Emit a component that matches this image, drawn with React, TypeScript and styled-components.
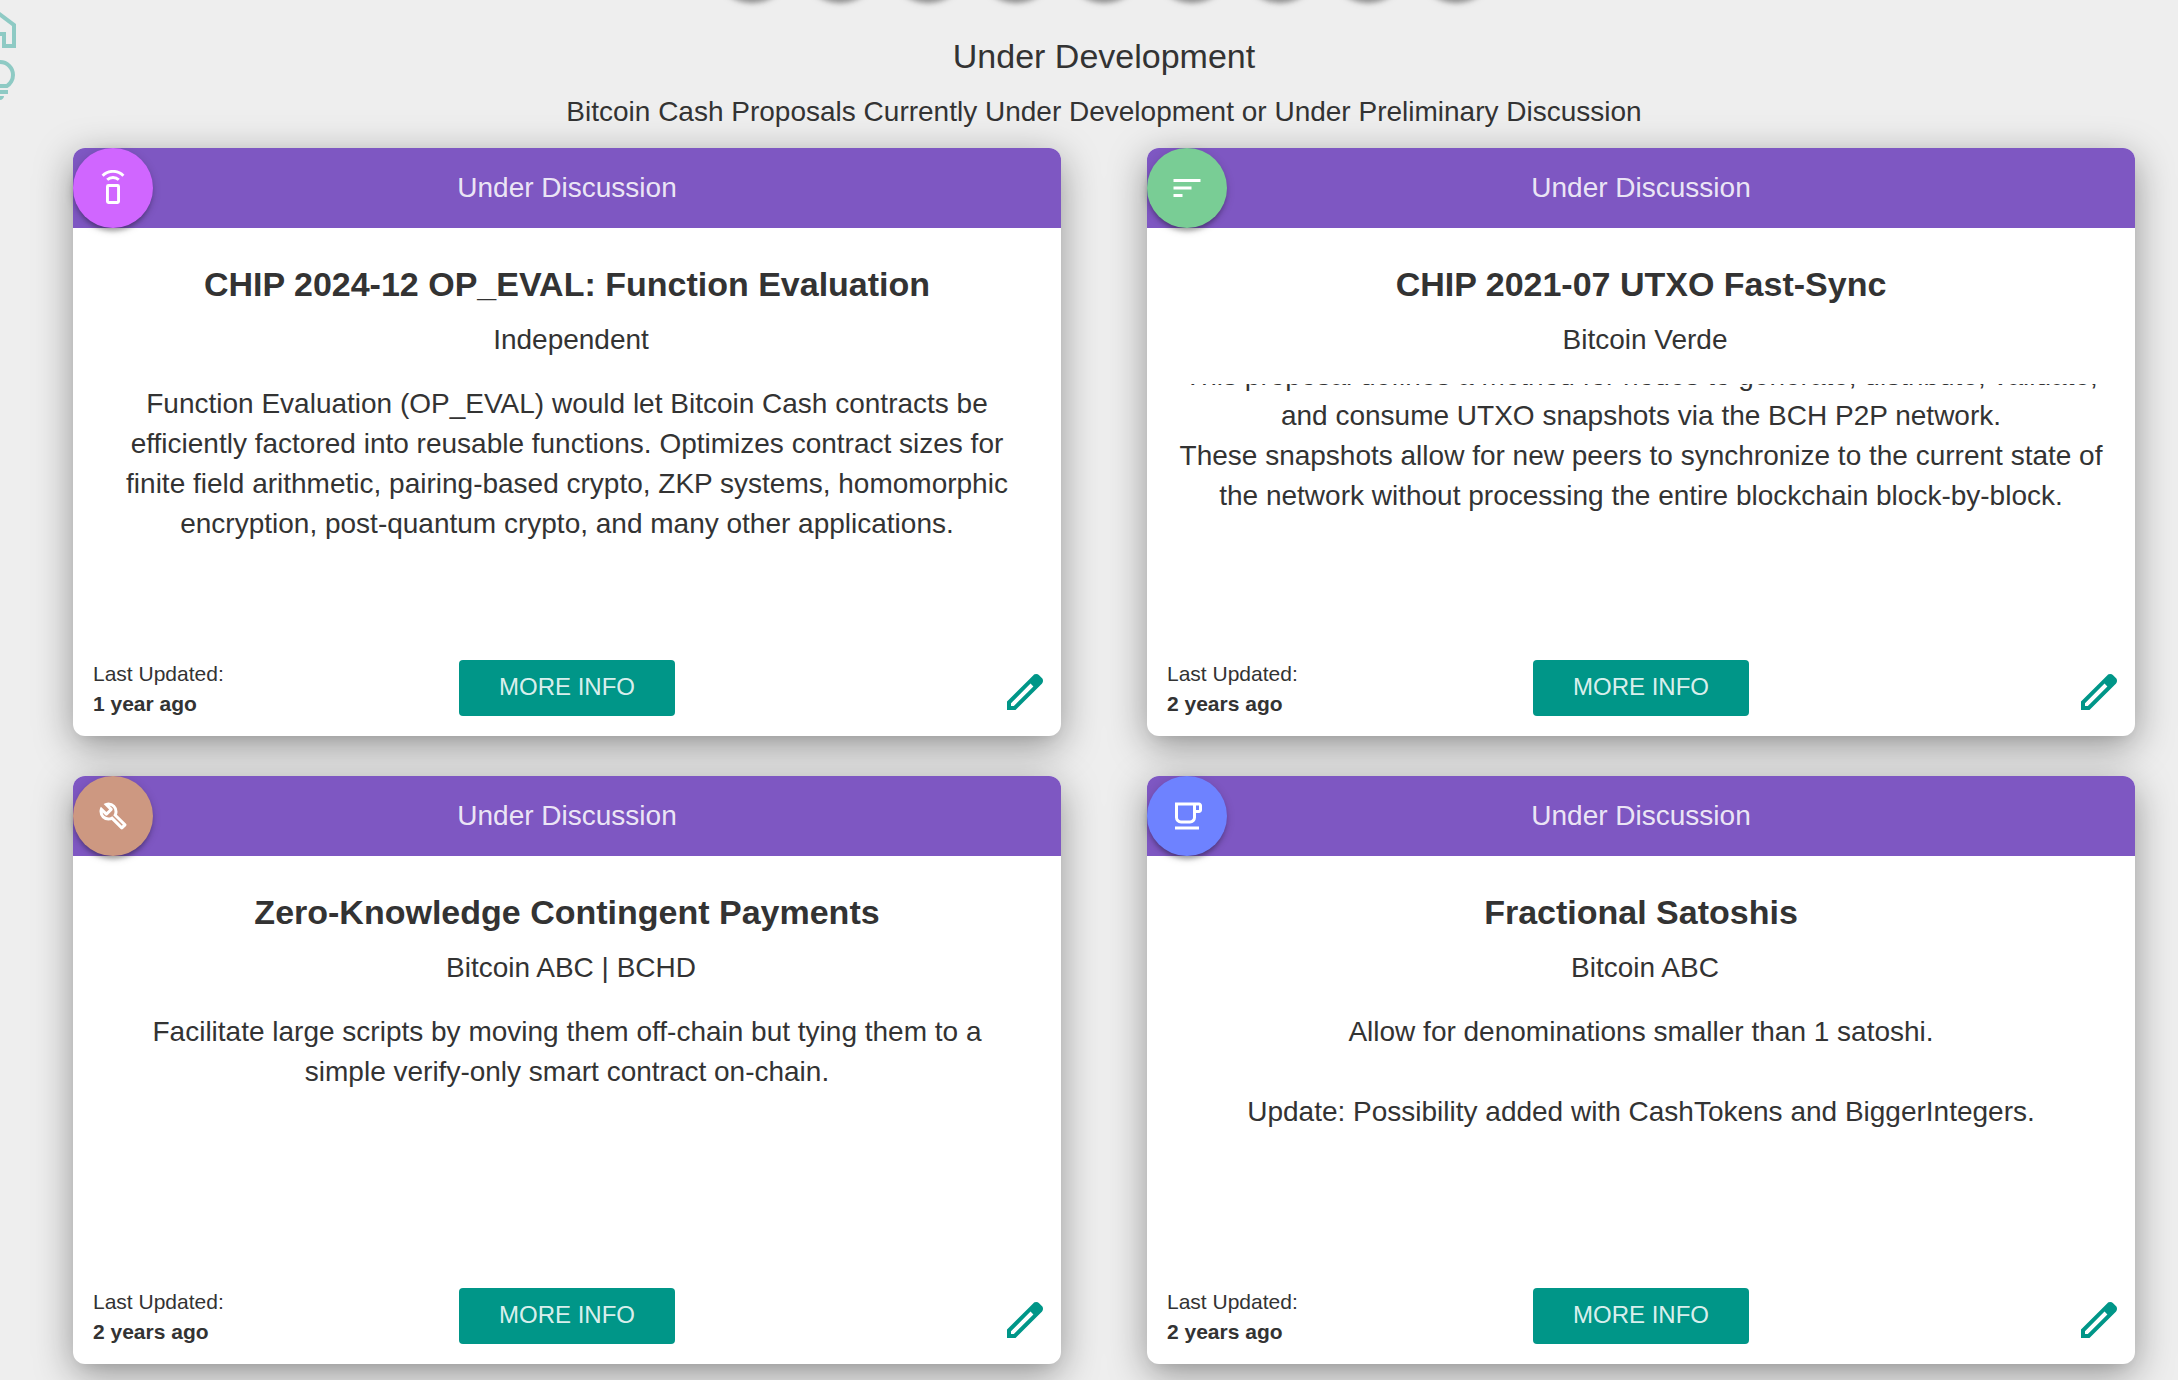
import React, { useLayoutEffect, useRef } from "react";
import styled, { createGlobalStyle } from "styled-components";

const GlobalStyle = createGlobalStyle`
  *, *::before, *::after { box-sizing: border-box; }
  body {
    margin: 0;
    background: #eee;
    color: #333;
    font-family: "Liberation Sans", Arial, sans-serif;
    font-size: 28px;
    line-height: 40px;
    overflow: hidden;
  }
`;

const Page = styled.div`
  display: flex;
  min-height: 100vh;
`;

const SideNav = styled.nav`
  flex: none;
  width: 30px;
  padding-top: 6px;
  display: flex;
  flex-direction: column;
  align-items: flex-end;
  gap: 2px;
`;

const NavLink = styled.a`
  display: flex;
  margin-right: 6px;
  color: #009688;
  opacity: 0.4;
`;

const Main = styled.main`
  flex: 1;
  min-width: 0;
`;

const AvatarRow = styled.div`
  display: flex;
  justify-content: center;
  gap: 8px;
  margin-top: -80px;
`;

const Avatar = styled.button<{ $color: string }>`
  flex: none;
  display: flex;
  align-items: center;
  justify-content: center;
  width: 80px;
  height: 80px;
  padding: 0;
  border: 0;
  border-radius: 50%;
  color: #fff;
  background: ${(p) => p.$color};
  box-shadow:
    0 4px 4px rgba(0, 0, 0, 0.14),
    0 6px 4px -4px rgba(0, 0, 0, 0.2),
    0 2px 10px rgba(0, 0, 0, 0.14);
`;

const Heading = styled.header`
  padding: 28px 0 8px;
  text-align: center;
`;

const SectionTitle = styled.h1`
  margin: 0;
  font-size: 34px;
  font-weight: 400;
  line-height: 56px;
`;

const SectionNote = styled.p`
  margin: 0;
  font-size: 28px;
  line-height: 56px;
`;

const CardGrid = styled.section`
  display: grid;
  grid-template-columns: repeat(2, minmax(0, 1fr));
  gap: 40px 86px;
  padding: 0 43px 40px;
`;

const CardBox = styled.article`
  display: flex;
  flex-direction: column;
  height: 588px;
  border-radius: 12px;
  background: #fff;
  box-shadow:
    0 10px 38px rgba(0, 0, 0, 0.38),
    0 8px 12px -6px rgba(0, 0, 0, 0.06);
`;

const CardHeader = styled.div`
  display: grid;
  grid-template-columns: 80px 1fr 80px;
  align-items: center;
  border-radius: 12px 12px 0 0;
  background: #7e57c2;
  color: rgba(255, 255, 255, 0.87);
  text-align: center;
`;

const CardTitle = styled.h2`
  margin: 28px 0 0;
  font-size: 34px;
  font-weight: 700;
  line-height: 56px;
  text-align: center;
`;

const CardOwner = styled.p`
  margin: 0 0 16px;
  padding-left: 8px;
  line-height: 56px;
  text-align: center;
`;

const Description = styled.div`
  flex: 1;
  min-height: 0;
  padding: 0 28px;
  overflow-y: auto;
  scrollbar-width: none;
  text-align: center;
  white-space: pre-line;
`;

const CardFooter = styled.footer`
  display: grid;
  grid-template-columns: 1fr auto 1fr;
  align-items: center;
  height: 100px;
  padding: 4px 12px 0 20px;
`;

const Updated = styled.div`
  padding-top: 2px;
  font-size: 21px;
  line-height: 30px;
`;

const InfoButton = styled.button`
  width: 216px;
  height: 56px;
  margin-right: 8px;
  padding: 0 0 2px;
  border: 0;
  border-radius: 4px;
  background: #009688;
  color: rgba(255, 255, 255, 0.87);
  font: 400 24px/54px "Liberation Sans", Arial, sans-serif;
`;

const EditLink = styled.a`
  display: flex;
  justify-self: end;
  padding-top: 8px;
  color: #009688;
`;

const paths = {
  home: "M240-200h120v-240h240v240h120v-360L480-740 240-560v360Zm-80 80v-480l320-240 320 240v480H520v-240h-80v240H160Z",
  bulb: "M480-80q-33 0-56.5-23.5T400-160h160q0 33-23.5 56.5T480-80ZM320-200v-80h320v80H320Zm10-120q-69-41-109.5-110T180-580q0-125 87.5-212.5T480-880q125 0 212.5 87.5T780-580q0 81-40.5 150T630-320H330Zm24-80h252q45-32 69.5-79T700-580q0-92-64-156t-156-64q-92 0-156 64t-64 156q0 54 24.5 101t69.5 79Z",
  edit: "M200-200h57l391-391-57-57-391 391v57Zm-80 80v-170l528-527q12-11 26.5-17t30.5-6q16 0 31 6t26 18l55 56q12 11 17.5 26t5.5 30q0 16-5.5 30.5T817-647L290-120H120Zm499-499-28-29 57 57-29-28Z",
  sort: "M120-240v-80h240v80H120Zm0-200v-80h480v80H120Zm0-200v-80h720v80H120Z",
  build: "M686-132 444-376q-20 8-40.5 12t-43.5 4q-100 0-170-70t-70-170q0-36 10-68.5t28-61.5l146 146 72-72-146-146q29-18 61.5-28t68.5-10q100 0 170 70t70 170q0 23-4 43.5T584-516l244 242q12 12 12 29t-12 29l-84 84q-12 12-29 12t-29-12Zm29-85 27-27-256-256q18-20 26-46.5t8-53.5q0-60-38.5-104.5T386-758l74 74q12 12 12 28t-12 28L332-500q-12 12-28 12t-28-12l-74-74q9 57 53.5 95.5T360-440q26 0 53-8t47-25l255 256Z",
  cafe: "M160-120v-80h640v80H160Zm160-160q-66 0-113-47t-47-113v-400h640q33 0 56.5 23.5T880-760v120q0 33-23.5 56.5T800-560h-80v120q0 66-47 113t-113 47H320Zm0-80h240q33 0 56.5-23.5T640-440v-320H240v320q0 33 23.5 56.5T320-360Zm400-280h80v-120h-80v120Z",
};

type IconName = keyof typeof paths | "remote";

function Icon({ name, size }: { name: IconName; size: number }) {
  if (name === "remote") {
    return (
      <svg width={size} height={size} viewBox="0 0 36 36" fill="none" stroke="currentColor" strokeWidth="2.9" aria-hidden="true">
        <rect x="12.45" y="15.45" width="11.1" height="17.1" rx="1" />
        <path d="M7.6 5.7A14.6 14.6 0 0 1 28.4 5.7M12.2 9.8A8.6 8.6 0 0 1 23.8 9.8" />
      </svg>
    );
  }
  return (
    <svg width={size} height={size} viewBox="0 -960 960 960" fill="currentColor" aria-hidden="true">
      <path d={paths[name]} />
    </svg>
  );
}

interface Proposal {
  icon: IconName;
  color: string;
  title: string;
  owner: string;
  text: string;
  updated: string;
  readToEnd?: boolean;
}

const proposals: Proposal[] = [
  {
    icon: "remote",
    color: "#d066ff",
    title: "CHIP 2024-12 OP_EVAL: Function Evaluation",
    owner: "Independent",
    text: "Function Evaluation (OP_EVAL) would let Bitcoin Cash contracts be efficiently factored into reusable functions. Optimizes contract sizes for finite field arithmetic, pairing-based crypto, ZKP systems, homomorphic encryption, post-quantum crypto, and many other applications.",
    updated: "1 year ago",
  },
  {
    icon: "sort",
    color: "#79cd95",
    title: "CHIP 2021-07 UTXO Fast-Sync",
    owner: "Bitcoin Verde",
    text: "This proposal defines a method for nodes to generate, distribute, validate, and consume UTXO snapshots via the BCH P2P network.\nThese snapshots allow for new peers to synchronize to the current state of the network without processing the entire blockchain block-by-block.\n\n\n\n",
    updated: "2 years ago",
    readToEnd: true,
  },
  {
    icon: "build",
    color: "#cd9881",
    title: "Zero-Knowledge Contingent Payments",
    owner: "Bitcoin ABC | BCHD",
    text: "Facilitate large scripts by moving them off-chain but tying them to a\nsimple verify-only smart contract on-chain.",
    updated: "2 years ago",
  },
  {
    icon: "cafe",
    color: "#6e82ff",
    title: "Fractional Satoshis",
    owner: "Bitcoin ABC",
    text: "Allow for denominations smaller than 1 satoshi.\n\nUpdate: Possibility added with CashTokens and BiggerIntegers.",
    updated: "2 years ago",
  },
];

function ProposalCard({ proposal }: { proposal: Proposal }) {
  const body = useRef<HTMLDivElement>(null);

  useLayoutEffect(() => {
    if (proposal.readToEnd && body.current) {
      body.current.scrollTop = body.current.scrollHeight;
    }
  }, [proposal.readToEnd]);

  return (
    <CardBox>
      <CardHeader>
        <Avatar $color={proposal.color} aria-label="Category">
          <Icon name={proposal.icon} size={36} />
        </Avatar>
        <span>Under Discussion</span>
      </CardHeader>
      <CardTitle>{proposal.title}</CardTitle>
      <CardOwner>{proposal.owner}</CardOwner>
      <Description ref={body}>{proposal.text}</Description>
      <CardFooter>
        <Updated>
          Last Updated:
          <br />
          <b>{proposal.updated}</b>
        </Updated>
        <InfoButton>MORE INFO</InfoButton>
        <EditLink href="#edit" aria-label="Edit">
          <Icon name="edit" size={48} />
        </EditLink>
      </CardFooter>
    </CardBox>
  );
}

const filters = Array.from({ length: 9 }, (_, i) => i);

export default function App() {
  return (
    <Page>
      <GlobalStyle />
      <SideNav>
        <NavLink href="#home" aria-label="Home">
          <Icon name="home" size={48} />
        </NavLink>
        <NavLink href="#ideas" aria-label="Ideas">
          <Icon name="bulb" size={48} />
        </NavLink>
      </SideNav>
      <Main>
        <AvatarRow>
          {filters.map((i) => (
            <Avatar key={i} $color="#8a8a8a" aria-label="Category filter" />
          ))}
        </AvatarRow>
        <Heading>
          <SectionTitle>Under Development</SectionTitle>
          <SectionNote>
            Bitcoin Cash Proposals Currently Under Development or Under Preliminary Discussion
          </SectionNote>
        </Heading>
        <CardGrid>
          {proposals.map((p) => (
            <ProposalCard key={p.title} proposal={p} />
          ))}
        </CardGrid>
      </Main>
    </Page>
  );
}
